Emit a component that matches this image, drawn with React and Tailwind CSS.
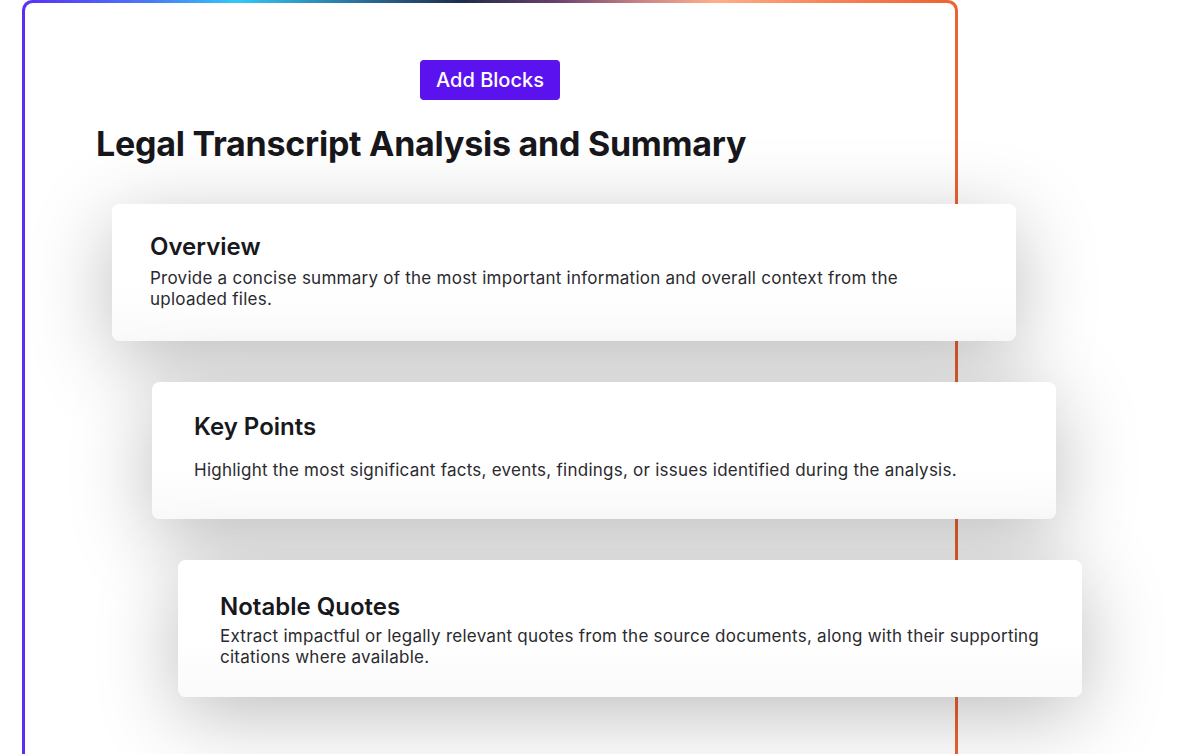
import React from 'react';

const blocks = [
  {
    id: 1,
    title: 'Overview',
    desc: 'Provide a concise summary of the most important information and overall context from the uploaded files.',
    wrap: 'ml-[87px] pl-[38px] pt-[29px]',
    descGap: 'mt-[7px]',
  },
  {
    id: 2,
    title: 'Key Points',
    desc: 'Highlight the most significant facts, events, findings, or issues identified during the analysis.',
    wrap: 'ml-[127px] pl-[42px] pt-[31px]',
    descGap: 'mt-[19px]',
  },
  {
    id: 3,
    title: 'Notable Quotes',
    desc: 'Extract impactful or legally relevant quotes from the source documents, along with their supporting citations where available.',
    wrap: 'ml-[153px] pl-[42px] pt-[33px]',
    descGap: 'mt-[5px]',
  },
];

const App = () => {
  return (
    <div className="w-[1195px] h-[754px] overflow-hidden bg-white pl-[22px] font-['Inter',_'Noto_Sans',_sans-serif]">
      {/* Gradient frame */}
      <div className="w-[936px] h-[800px] rounded-t-[10px] p-[3px] pb-0 bg-[linear-gradient(to_right,#5a2ef5_0%,#4a7cf7_14%,#30c9f7_23%,#2b6f9c_36%,#1f2c4c_47%,#6b3f6c_57%,#c98486_66%,#ffae8a_74%,#f7855a_86%,#ec6230_100%)]">
        <div className="h-full rounded-t-[8px] bg-white pt-[57px]">
          <div className="flex justify-center">
            <button className="h-[40px] w-[140px] rounded-[4px] bg-[#5a13ee] text-[20px] font-medium text-white">
              Add Blocks
            </button>
          </div>

          <h1 className="mt-[20px] pl-[71px] text-[34px] leading-[48px] font-bold tracking-[-0.25px] text-[#17171c]">
            Legal Transcript Analysis and Summary
          </h1>

          <div className="mt-[36px] flex flex-col gap-[41px]">
            {blocks.map((b) => (
              <div
                key={b.id}
                className={`${b.wrap} relative h-[137px] w-[904px] shrink-0 rounded-[8px] bg-[linear-gradient(to_bottom,#ffffff_60%,#fafafa_100%)] pr-[38px] shadow-[0_18px_80px_rgba(0,0,0,0.26)]`}
              >
                <h3 className="text-[24px] leading-[28px] font-semibold text-[#18181d]">{b.title}</h3>
                <p className={`${b.descGap} max-w-[824px] text-[17px] leading-[21px] tracking-[0.25px] text-[#2a2a2f]`}>{b.desc}</p>
              </div>
            ))}
          </div>
        </div>
      </div>
    </div>
  );
};

export default App;
